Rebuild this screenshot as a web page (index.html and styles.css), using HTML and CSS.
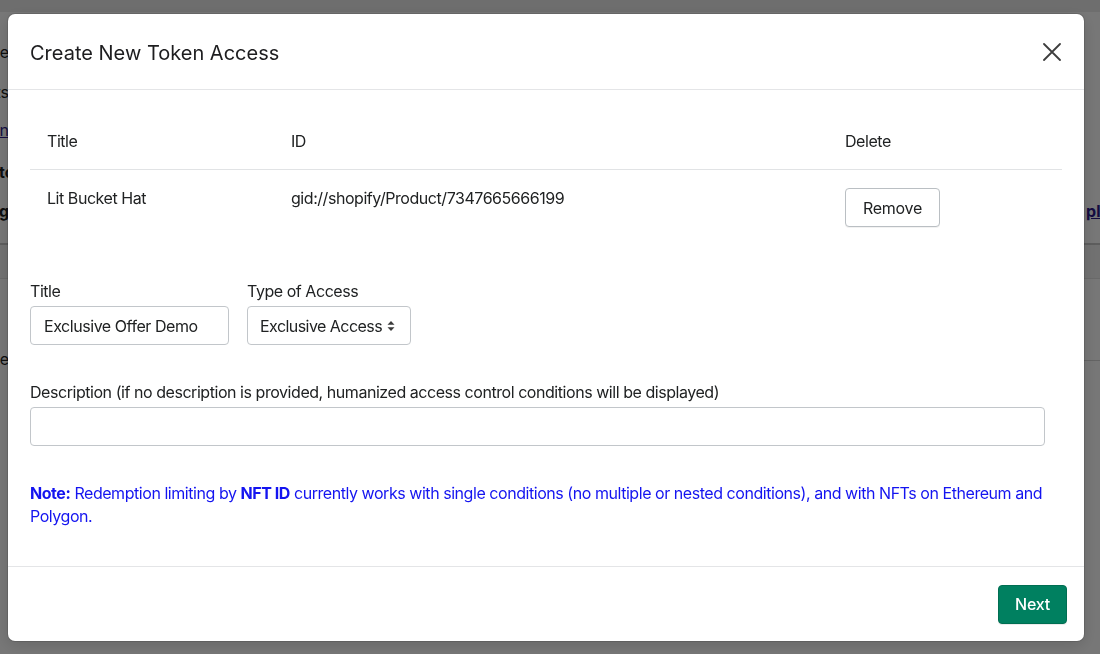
FILE: index.html
```html
<!DOCTYPE html>
<html lang="en">
<head>
<meta charset="utf-8">
<title>Create New Token Access</title>
<link rel="stylesheet" href="styles.css">
</head>
<body>
<div class="page">
  <div class="topbar"></div>
  <div class="page-content">
    <div class="bg-row r1"><span class="bg-cut">Title</span></div>
    <div class="bg-row r2"><span class="bg-cut">Products</span></div>
    <div class="bg-row r3"><span class="bg-cut"><a class="bg-link" href="#">Learn</a></span></div>
    <div class="bg-row r4"><span class="bg-start bold">to</span></div>
    <div class="bg-row r5"><span class="bg-start bold">g</span><a class="bg-link bold right-link" href="#">pl</a></div>
    <div class="bg-rule"></div>
    <div class="bg-band"></div>
    <div class="bg-row r6"><span class="bg-cut">Type</span></div>
    <div class="bg-rule lower"></div>
  </div>
</div>

<div class="overlay">
  <div class="modal" role="dialog" aria-labelledby="modal-title">
    <div class="modal-header">
      <h2 class="modal-title" id="modal-title">Create New Token Access</h2>
      <button class="close-btn" aria-label="Close">
        <svg width="18" height="18" viewBox="0 0 18 18"><path d="M1 1 L17 17 M17 1 L1 17" stroke="#3d3d3d" stroke-width="1.8" stroke-linecap="round" fill="none"/></svg>
      </button>
    </div>
    <div class="modal-body">
      <table class="product-table">
        <thead>
          <tr>
            <th class="col-title">Title</th>
            <th class="col-id">ID</th>
            <th class="col-del">Delete</th>
          </tr>
        </thead>
        <tbody>
          <tr>
            <td>Lit Bucket Hat</td>
            <td>gid://shopify/Product/7347665666199</td>
            <td><button class="btn-remove">Remove</button></td>
          </tr>
        </tbody>
      </table>

      <div class="field-row">
        <div class="field">
          <label class="label" for="title">Title</label>
          <input class="input input-title" id="title" type="text" value="Exclusive Offer Demo">
        </div>
        <div class="field">
          <label class="label" for="type">Type of Access</label>
          <div class="select">
            <span class="select-value">Exclusive Access</span>
            <svg class="select-arrows" width="8" height="12" viewBox="0 0 8 12"><path d="M4 1 L7.5 4.8 H0.5 Z M4 11 L7.5 7.2 H0.5 Z" fill="#3a3a3a"/></svg>
          </div>
        </div>
      </div>

      <div class="field desc-field">
        <label class="label" for="desc">Description (if no description is provided, humanized access control conditions will be displayed)</label>
        <input class="input input-desc" id="desc" type="text">
      </div>

      <p class="note"><strong>Note:</strong> Redemption limiting by <strong>NFT ID</strong> currently works with single conditions (no multiple or nested conditions), and with NFTs on Ethereum and Polygon.</p>
    </div>
    <div class="modal-footer">
      <button class="btn-next">Next</button>
    </div>
  </div>
</div>
</body>
</html>
```

FILE: styles.css
```css
* { box-sizing: border-box; }

html, body {
  margin: 0;
  padding: 0;
  height: 100%;
}

body {
  font-family: "Inter", "Helvetica Neue", Arial, sans-serif;
  color: #202223;
  background: #ffffff;
  overflow: hidden;
}

/* ---------- page behind the modal ---------- */
.page {
  width: 1100px;
  height: 654px;
}

.topbar {
  height: 12px;
  background: #ececec;
}

.page-content {
  display: flex;
  flex-direction: column;
}

.bg-row {
  height: 24px;
  line-height: 24px;
  font-size: 16px;
  white-space: nowrap;
}

.r1 { margin-top: 28px; }
.r2 { margin-top: 16px; }
.r3 { margin-top: 14px; }
.r4 { margin-top: 18px; }
.r5 { margin-top: 15px; }
.r6 { margin-top: 68px; }

.bg-cut {
  display: inline-block;
  width: 9px;
  overflow: hidden;
  direction: rtl;
  text-align: right;
}

.bg-start {
  display: inline-block;
  margin-left: -1px;
}

.bold { font-weight: 700; }

.bg-link {
  color: #2c1a8c;
  text-decoration: underline;
}

.right-link {
  margin-left: 1077px;
}

.bg-rule {
  margin-top: 20px;
  height: 2px;
  background: #c8c8c8;
}

.bg-band {
  height: 34px;
  background: #f3f3f3;
  border-bottom: 1px solid #e2e2e2;
}

.bg-rule.lower {
  margin: -11px 0 0 1000px;
  height: 1px;
  background: #d6d6d6;
}

/* ---------- overlay + modal ---------- */
.overlay {
  position: fixed;
  inset: 0;
  background: rgba(0, 0, 0, 0.535);
  display: flex;
  align-items: flex-start;
  justify-content: flex-start;
  padding: 14px 0 0 8px;
}

.modal {
  width: 1076px;
  height: 627px;
  background: #ffffff;
  border-radius: 7px;
  box-shadow: 0 0 0 1px rgba(0, 0, 0, 0.12), 0 4px 16px rgba(0, 0, 0, 0.15);
  display: flex;
  flex-direction: column;
  overflow: hidden;
}

.modal-header {
  height: 76px;
  flex: none;
  display: flex;
  align-items: center;
  justify-content: space-between;
  padding: 2px 23px 0 22px;
  border-bottom: 1px solid #e4e5e7;
}

.modal-title {
  margin: 0;
  font-size: 20px;
  font-weight: 400;
  line-height: 30px;
  color: #1d1d1f;
}

.close-btn {
  width: 18px;
  height: 18px;
  margin-top: -2px;
  padding: 0;
  border: 0;
  background: transparent;
  display: flex;
  cursor: pointer;
}

.modal-body {
  flex: 1;
  padding: 23px 22px 0 22px;
  font-size: 16px;
  line-height: 24px;
  letter-spacing: -0.45px;
}

/* table */
.product-table {
  width: 100%;
  border-collapse: collapse;
  table-layout: fixed;
}

.product-table th,
.product-table td {
  text-align: left;
  font-weight: 400;
  vertical-align: top;
  padding: 16px 17px;
}

.product-table th {
  border-bottom: 1px solid #e1e3e5;
}

.col-title { width: 244px; }
.col-id { width: 554px; }

.btn-remove {
  margin-top: 2px;
  height: 39px;
  width: 95px;
  font-family: inherit;
  font-size: 16px;
  letter-spacing: -0.3px;
  color: #202223;
  background: #ffffff;
  border: 1px solid #babfc3;
  border-radius: 4px;
  box-shadow: 0 1px 0 rgba(0, 0, 0, 0.05);
}

/* fields */
.field-row {
  display: flex;
  gap: 18px;
  margin-top: 36px;
}

.field {
  display: flex;
  flex-direction: column;
}

.label {
  line-height: 24px;
  margin-bottom: 3px;
}

.input,
.select {
  height: 39px;
  border: 1px solid #c2c6ca;
  border-radius: 4px;
  font-family: inherit;
  font-size: 16px;
  letter-spacing: -0.45px;
  color: #202223;
  background: #ffffff;
}

.input {
  padding: 0 13px;
  outline: none;
}

.input-title { width: 199px; }

.select {
  width: 164px;
  display: flex;
  align-items: center;
  padding: 0 0 0 12px;
  white-space: nowrap;
  letter-spacing: -0.55px;
}

.select-value {
  flex: 1;
}

.select-arrows {
  flex: none;
  margin-right: 15px;
}

.desc-field {
  margin-top: 35px;
}

.input-desc {
  width: 1015px;
}

.note {
  margin: 36px 0 0 0;
  color: #1414f0;
  line-height: 23px;
}

.note strong {
  font-weight: 700;
}

/* footer */
.modal-footer {
  height: 75px;
  flex: none;
  border-top: 1px solid #e4e5e7;
  display: flex;
  align-items: center;
  justify-content: flex-end;
  padding: 0 17px 0 0;
}

.btn-next {
  height: 39px;
  width: 69px;
  font-family: inherit;
  font-size: 16px;
  font-weight: 500;
  letter-spacing: -0.2px;
  color: #ffffff;
  background: #008060;
  border: 1px solid #006e52;
  border-radius: 4px;
  box-shadow: 0 1px 0 rgba(0, 0, 0, 0.08);
}
```
